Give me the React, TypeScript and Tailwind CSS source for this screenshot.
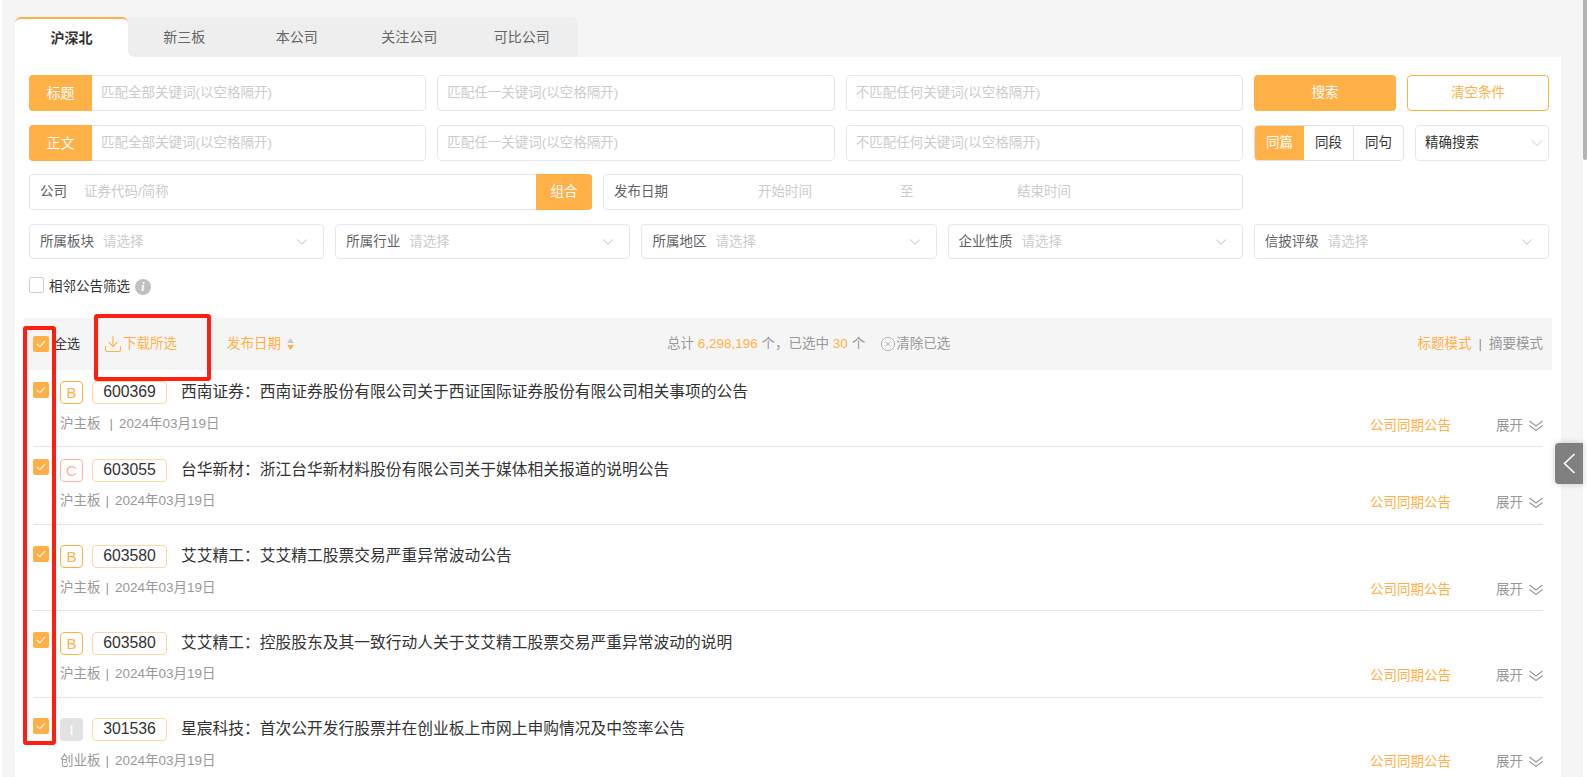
import React from 'react';
import { ChevronDown, CircleX, Download } from 'lucide-react';

const tabs = ['新三板', '本公司', '关注公司', '可比公司'];
const selects = ['所属板块', '所属行业', '所属地区', '企业性质', '信披评级'];
const keywordHints = ['匹配全部关键词(以空格隔开)', '匹配任一关键词(以空格隔开)', '不匹配任何关键词(以空格隔开)'];

const rows = [
  { badge: 'B', code: '600369', title: '西南证券：西南证券股份有限公司关于西证国际证券股份有限公司相关事项的公告', board: '沪主板', sep: 'ml-[9px] mr-[6px]', box: 'h-[77px] pt-[11px] border-b', check: 'mt-px', meta: 'mt-[10px]', side: 'mt-[2px]' },
  { badge: 'C', code: '603055', title: '台华新材：浙江台华新材料股份有限公司关于媒体相关报道的说明公告', board: '沪主板', sep: 'ml-[5px] mr-[6px]', box: 'h-[78px] pt-[12px] border-b', check: 'mt-0', meta: 'mt-[9px]', side: 'mt-[2px]' },
  { badge: 'B', code: '603580', title: '艾艾精工：艾艾精工股票交易严重异常波动公告', board: '沪主板', sep: 'ml-[5px] mr-[6px]', box: 'h-[86px] pt-[20px] border-b', check: 'mt-px', meta: 'mt-[10px]', side: 'mt-[2px]' },
  { badge: 'B', code: '603580', title: '艾艾精工：控股股东及其一致行动人关于艾艾精工股票交易严重异常波动的说明', board: '沪主板', sep: 'ml-[5px] mr-[6px]', box: 'h-[87px] pt-[21px] border-b', check: 'mt-0', meta: 'mt-[9px]', side: 'mt-[2px]' },
  { badge: 'I', code: '301536', title: '星宸科技：首次公开发行股票并在创业板上市网上申购情况及中签率公告', board: '创业板', sep: 'ml-[5px] mr-[6px]', box: 'h-[86px] pt-[20px]', check: 'mt-0', meta: 'mt-[10px]', side: 'mt-[1px]' },
];

const badgeStyle: Record<string, string> = {
  B: 'border border-[#ffb148] text-[#ffb148]',
  C: 'border border-[#ffb3a8] text-[#ffb3a8]',
  I: 'bg-[#e2e2e2] text-white',
};

const Checked = ({ className = '' }: { className?: string }) => (
  <span className={`flex h-4 w-4 shrink-0 items-center justify-center rounded-[2px] bg-[#ffb148] ${className}`}>
    <svg width="10" height="8" viewBox="0 0 10 8" fill="none" stroke="#fff" strokeWidth="1.1">
      <path d="M1 4l2.8 2.8L9 1.2" />
    </svg>
  </span>
);

const DoubleChevron = () => (
  <svg width="14" height="12" viewBox="0 0 14 12" fill="none" stroke="#999" strokeWidth="1.1">
    <path d="M.5 1l6.5 5 6.5-5" />
    <path d="M.5 5.5l6.5 5 6.5-5" />
  </svg>
);

const KeywordRow = ({ label, children }: { label: string; children: React.ReactNode }) => (
  <div className="flex h-9 gap-[11px]">
    <div className="grid w-[1214px] grid-cols-3 gap-[11px]">
      {keywordHints.map((hint, i) => (
        <div key={hint} className="flex items-center rounded border border-[#e4e7ed] bg-white">
          {i === 0 && (
            <span className="-my-px -ml-px mr-[9px] flex h-9 w-[63px] items-center justify-center rounded-l bg-[#ffb148] text-[14px] text-white">
              {label}
            </span>
          )}
          <span className={i === 0 ? 'text-[#cccccc]' : 'pl-[9px] text-[#cccccc]'}>{hint}</span>
        </div>
      ))}
    </div>
    {children}
  </div>
);

const App = () => {
  return (
    <div className="relative flex h-[777px] w-[1587px] overflow-hidden bg-[#f5f5f5] text-[13.5px] leading-5 text-[#333] font-['Liberation_Sans','Noto_Sans_CJK_SC',sans-serif]">
      <div className="w-[2px] shrink-0 bg-white" />
      <div className="w-[1581px] shrink-0 pl-[13px] pr-[22px] pt-[17px]">
        {/* tabs */}
        <div className="flex h-10 w-[563px] text-[14px] text-[#666]">
          <div className="flex w-[113px] items-center justify-center rounded-t-md border-t-2 border-[#ffb148] bg-white font-bold text-[#333]">
            沪深北
          </div>
          <div className="flex-1 bg-[linear-gradient(to_right,#ffffff_10px,transparent_10px)]">
            <div className="flex h-10 rounded-tr-md rounded-bl-md bg-[#eeeeee]">
              {tabs.map((tab) => (
                <div key={tab} className="flex w-[112.5px] items-center justify-center">
                  {tab}
                </div>
              ))}
            </div>
          </div>
        </div>

        <div className="h-[720px] bg-white pl-[14px] pr-[12px] pt-[18px]">
          {/* filters */}
          <div className="flex flex-col gap-[14px]">
            <KeywordRow label="标题">
              <button className="w-[142px] rounded bg-[#ffb148] text-white">搜索</button>
              <button className="w-[142px] rounded border border-[#ffb148] text-[#ffb148]">清空条件</button>
            </KeywordRow>
            <KeywordRow label="正文">
              <div className="flex w-[150px] overflow-hidden rounded border border-[#dfe1ea]">
                <span className="flex w-[49px] items-center justify-center bg-[#ffb148] text-white">同篇</span>
                <span className="flex w-[50px] items-center justify-center border-r border-[#dfe1ea]">同段</span>
                <span className="flex flex-1 items-center justify-center">同句</span>
              </div>
              <div className="flex w-[134px] items-center justify-between rounded border border-[#e4e7ed] pl-[9px] pr-[1px]">
                <span>精确搜索</span>
                <ChevronDown size={20} strokeWidth={0.9} color="#b8b8c0" />
              </div>
            </KeywordRow>
          </div>

          <div className="mt-[13px] flex h-9 gap-[11px]">
            <div className="flex w-[563px] items-center rounded border border-[#e4e7ed] pl-[10px]">
              <span className="mr-[17px] text-[#606266]">公司</span>
              <span className="flex-1 text-[#cccccc]">证券代码/简称</span>
              <span className="-my-px -mr-px flex h-9 w-[56px] items-center justify-center rounded-r bg-[#ffb148] text-white">
                组合
              </span>
            </div>
            <div className="flex w-[640px] items-center rounded border border-[#e4e7ed] pl-[10px] text-[#cccccc]">
              <span className="w-[144px] text-[#606266]">发布日期</span>
              <span className="w-[142px]">开始时间</span>
              <span className="w-[117px]">至</span>
              <span>结束时间</span>
            </div>
          </div>

          <div className="mt-[14px] grid h-[35px] w-[1520px] grid-cols-5 gap-[11px]">
            {selects.map((name) => (
              <div key={name} className="flex items-center rounded border border-[#e4e7ed] pl-[10px] pr-[12px]">
                <span className="mr-[9px] text-[#606266]">{name}</span>
                <span className="flex-1 text-[#cccccc]">请选择</span>
                <ChevronDown size={18} strokeWidth={1} color="#a9a9b2" />
              </div>
            ))}
          </div>

          <div className="mt-[18px] flex h-4 items-start">
            <span className="h-4 w-[15px] rounded-[2px] border border-[#cfcfcf]" />
            <span className="ml-[5px]">相邻公告筛选</span>
            <span className="ml-[5px] mt-[2px] flex h-[16px] w-[16px] items-center justify-center rounded-full bg-[#c0c0c0] text-[12px] font-bold italic text-white font-['Liberation_Serif',serif]">
              i
            </span>
          </div>

          {/* result toolbar */}
          <div className="ml-[-5px] mt-[25px] flex h-[52px] w-[1528px] items-center bg-[#f5f5f5] pl-[9px] pr-[9px]">
            <Checked />
            <span className="ml-[5px] text-[13px]">全选</span>
            <span className="ml-[23px] flex items-center text-[#ffb148]">
              <Download size={20} strokeWidth={1.3} />
              <span>下载所选</span>
            </span>
            <span className="ml-[50px] flex items-center text-[#ffb148]">
              发布日期
              <svg className="ml-[6px]" width="7" height="12" viewBox="0 0 7 12">
                <path d="M3.5 0L7 5H0z" fill="#c9c9c9" />
                <path d="M3.5 12L7 7H0z" fill="#ffb148" />
              </svg>
            </span>
            <span className="ml-[373px] whitespace-pre text-[#999]">
              总计 <span className="text-[#ffb148]">6,298,196</span> 个，已选中 <span className="text-[#ffb148]">30</span> 个
            </span>
            <span className="ml-[15px] flex items-center text-[#999]">
              <CircleX size={16} strokeWidth={1} />
              <span>清除已选</span>
            </span>
            <span className="ml-auto text-[#ffb148]">标题模式</span>
            <span className="mx-[7px] text-[#999]">|</span>
            <span className="text-[#999]">摘要模式</span>
          </div>

          {/* result rows */}
          <div className="ml-[4px] w-[1510px]">
            {rows.map((row) => (
              <div key={row.code + row.title} className={`flex border-[#e5e5e5] ${row.box}`}>
                <Checked className={row.check} />
                <div className="ml-[11px] flex-1">
                  <div className="flex h-[23px] items-center">
                    <span className={`flex h-[23px] w-[23px] items-center justify-center rounded text-[15px] ${badgeStyle[row.badge]}`}>
                      {row.badge}
                    </span>
                    <span className="ml-[9px] flex h-[23px] w-[75px] items-center justify-center rounded border border-[#ffd8a6] pb-[2px] text-[15.8px]">
                      {row.code}
                    </span>
                    <span className="mb-[2px] ml-[14px] text-[15.75px]">{row.title}</span>
                  </div>
                  <div className={`flex items-start justify-between text-[#999] ${row.meta}`}>
                    <span>
                      {row.board}
                      <span className={row.sep}>|</span>
                      2024年03月19日
                    </span>
                    <div className={`flex items-center ${row.side}`}>
                      <span className="text-[#ffb148]">公司同期公告</span>
                      <span className="ml-[45px]">展开</span>
                      <span className="ml-[6px]">
                        <DoubleChevron />
                      </span>
                    </div>
                  </div>
                </div>
              </div>
            ))}
          </div>
        </div>
      </div>

      {/* page scrollbar */}
      <div className="w-[4px] shrink-0 bg-white">
        <div className="h-[160px] rounded-b-sm bg-[#b4b4b4]" />
      </div>

      {/* side drawer handle */}
      <div className="absolute left-[1555px] top-[443px] flex h-[41px] w-[28px] items-center justify-center rounded-l-sm bg-[#808080] shadow-[0_0_6px_rgba(0,0,0,0.2)]">
        <svg width="13" height="21" viewBox="0 0 13 21" fill="none" stroke="#fff" strokeWidth="1.6">
          <path d="M11.5 1L1.5 10.5l10 9.5" />
        </svg>
      </div>

      {/* red annotation boxes */}
      <div className="absolute left-[23px] top-[326px] h-[419px] w-[33px] rounded-[3px] border-4 border-[#ff1f10]" />
      <div className="absolute left-[94px] top-[314px] h-[67px] w-[117px] rounded-[3px] border-4 border-[#ff1f10]" />
    </div>
  );
};

export default App;
